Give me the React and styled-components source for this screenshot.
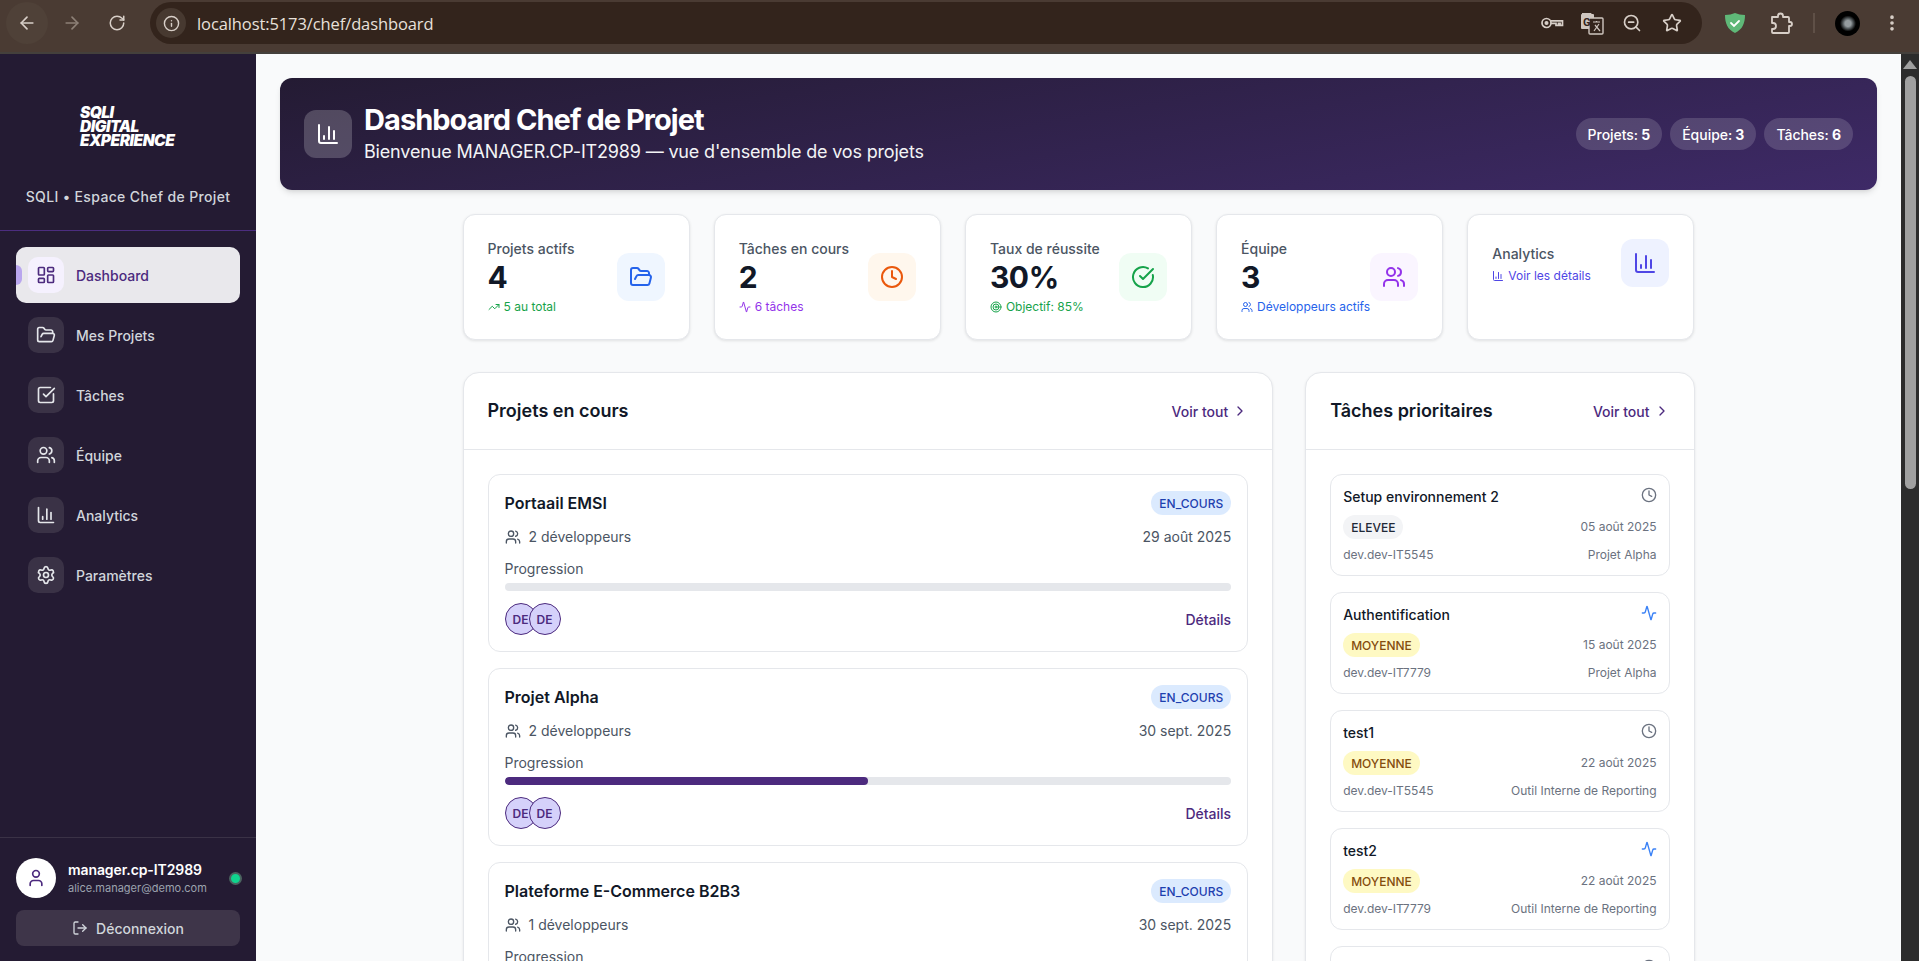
import React from 'react';
import styled, { createGlobalStyle } from 'styled-components';
import {
  Activity, ArrowLeft, ArrowRight, BarChart3, CheckCircle, CheckSquare, ChevronRight, Clock,
  FolderOpen, Info, LayoutDashboard, LogOut, MoreVertical, RotateCw, Settings, Star,
  Target, TrendingUp, User, Users, ZoomOut,
} from 'lucide-react';

const GlobalStyle = createGlobalStyle`
  html, body { margin: 0; height: 100%; overflow: hidden; }
  body { font-family: Inter, "Noto Sans", sans-serif; color: #111827; }
  * { box-sizing: border-box; }
`;

const Window = styled.div`
  height: 100vh;
  display: flex;
  flex-direction: column;
`;

/* browser toolbar */
const Toolbar = styled.div`
  height: 54px;
  flex: none;
  display: flex;
  align-items: center;
  padding: 0 5px 6px 6px;
  background: #4a3b33;
  border-bottom: 2px solid #44403c;
  color: #d8cfc8;
`;

const Slot = styled.div`
  width: ${p => p.$w || 42}px;
  height: 42px;
  flex: none;
  display: flex;
  align-items: center;
  justify-content: center;
  border-radius: 50%;
  background: ${p => (p.$hover ? '#4f4138' : 'transparent')};
  color: ${p => (p.$dim ? '#8d8077' : 'inherit')};
  margin-right: ${p => p.$mr || 0}px;
`;

const AddressBar = styled.div`
  width: 1552px;
  height: 42px;
  flex: none;
  margin: 0 10px 0 12px;
  padding: 0 10px 0 6px;
  display: flex;
  align-items: center;
  border-radius: 21px;
  background: #33241c;
`;

const SiteInfo = styled.div`
  width: 30px;
  height: 30px;
  display: flex;
  align-items: center;
  justify-content: center;
  border-radius: 50%;
  background: #473930;
`;

const Url = styled.div`
  margin-left: 11px;
  flex: 1;
  font-family: "Open Sans", sans-serif;
  font-size: 16.5px;
  letter-spacing: -0.1px;
  color: #e8e0da;
`;

const Divider = styled.div`
  width: 20px;
  display: flex;
  justify-content: center;
  &::after {
    content: '';
    width: 2px;
    height: 20px;
    background: #5f5047;
  }
`;

const ProfileDot = styled.div`
  width: 25px;
  height: 25px;
  border-radius: 50%;
  background: radial-gradient(circle at 52% 50%, #959c9f 0 3px, #555b5e 5px, #000 8px, #000 100%);
`;

/* page */
const Body = styled.div`
  flex: 1;
  min-height: 0;
  display: flex;
`;

const Sidebar = styled.aside`
  width: 256px;
  flex: none;
  display: flex;
  flex-direction: column;
  background: #241b33;
`;

const Brand = styled.div`
  height: 177px;
  flex: none;
  display: flex;
  flex-direction: column;
  align-items: center;
  border-bottom: 1px solid #4c2d80;
`;

const Logo = styled.div`
  margin: 52px 0 0 0;
  width: 96px;
  font-family: Inter, sans-serif;
  font-size: 15.5px;
  line-height: 14px;
  font-weight: 900;
  font-style: italic;
  letter-spacing: -0.5px;
  color: #fff;
  white-space: nowrap;
  text-transform: uppercase;
`;

const Tagline = styled.div`
  margin-top: 39px;
  font-size: 14px;
  line-height: 20px;
  font-weight: 500;
  letter-spacing: 0.35px;
  color: #d1d5db;
`;

const Nav = styled.nav`
  flex: 1;
  display: flex;
  flex-direction: column;
  gap: 4px;
  padding: 16px 16px 0;
`;

const NavItem = styled.div`
  position: relative;
  height: 56px;
  padding: 0 12px;
  display: flex;
  align-items: center;
  gap: 12px;
  border-radius: 10px;
  font-size: 14px;
  font-weight: 500;
  background: ${p => (p.$active ? '#e9e8ec' : 'transparent')};
  color: ${p => (p.$active ? '#4c2a7e' : '#d1d5db')};
  ${p => p.$active && `
    &::before {
      content: '';
      position: absolute;
      left: 0;
      top: 18px;
      width: 6px;
      height: 20px;
      border-radius: 0 6px 6px 0;
      background: #b9a6ee;
    }
  `}
`;

const NavIcon = styled.div`
  width: 36px;
  height: 36px;
  display: flex;
  align-items: center;
  justify-content: center;
  border-radius: 10px;
  background: ${p => (p.$active ? '#f5f1fe' : '#3a3246')};
  color: ${p => (p.$active ? '#4c2a7e' : '#e5e7eb')};
`;

const SideFooter = styled.div`
  flex: none;
  padding: 20px 16px 15px;
  border-top: 1px solid #3a3246;
`;

const UserRow = styled.div`
  display: flex;
  align-items: center;
  gap: 12px;
`;

const UserAvatar = styled.div`
  width: 40px;
  height: 40px;
  flex: none;
  display: flex;
  align-items: center;
  justify-content: center;
  border-radius: 50%;
  background: #fff;
  color: #4c2a7e;
`;

const UserText = styled.div`
  flex: 1;
  min-width: 0;
`;

const UserName = styled.div`
  font-size: 14px;
  line-height: 20px;
  font-weight: 600;
  letter-spacing: -0.1px;
  color: #fff;
`;

const UserMail = styled.div`
  font-size: 11px;
  line-height: 16px;
  color: #9ca3af;
`;

const StatusDot = styled.div`
  width: 13px;
  height: 13px;
  flex: none;
  margin-right: -2px;
  border-radius: 50%;
  background: #10d48e;
  border: 2px solid #4b6460;
`;

const LogoutButton = styled.div`
  height: 36px;
  margin-top: 12px;
  display: flex;
  align-items: center;
  justify-content: center;
  gap: 8px;
  border-radius: 8px;
  background: #3e3549;
  font-size: 14px;
  font-weight: 500;
  color: #d1d5db;
`;

const Main = styled.main`
  flex: 1;
  min-width: 0;
  overflow: hidden;
  padding: 24px 24px 0;
  background: #f9fafb;
`;

const Banner = styled.header`
  height: 112px;
  padding: 0 24px;
  display: flex;
  align-items: center;
  justify-content: space-between;
  border-radius: 12px;
  background: linear-gradient(170deg, #241b33, #3e2a67);
  box-shadow: 0 4px 6px -1px rgba(0, 0, 0, .1), 0 2px 4px -2px rgba(0, 0, 0, .1);
  color: #fff;
`;

const BannerLeft = styled.div`
  display: flex;
  align-items: center;
  gap: 12px;
`;

const BannerText = styled.div`
  padding-bottom: 4px;
`;

const BannerIcon = styled.div`
  width: 48px;
  height: 48px;
  display: flex;
  align-items: center;
  justify-content: center;
  border-radius: 12px;
  background: rgba(255, 255, 255, .2);
`;

const BannerTitle = styled.h1`
  margin: 0;
  font-size: 29px;
  line-height: 36px;
  font-weight: 700;
  letter-spacing: -0.95px;
`;

const BannerSub = styled.p`
  margin: 4px 0 0;
  font-size: 18px;
  line-height: 20px;
  letter-spacing: -0.17px;
  color: #f3f4f6;
`;

const Pills = styled.div`
  display: flex;
  gap: 8px;
`;

const Pill = styled.div`
  height: 32px;
  padding: 0 12px;
  display: flex;
  align-items: center;
  gap: 3.2px;
  border-radius: 16px;
  background: rgba(255, 255, 255, .15);
  font-size: 14px;
  font-weight: 500;
  letter-spacing: -0.03px;
  b { font-weight: 700; }
`;

const Content = styled.div`
  max-width: 1280px;
  margin: 24px auto 0;
  padding: 0 24px;
`;

const StatGrid = styled.div`
  display: grid;
  grid-template-columns: repeat(5, 1fr);
  gap: 24px;
  margin-bottom: 32px;
`;

const StatCard = styled.div`
  height: 126px;
  padding: 24px;
  display: flex;
  align-items: ${p => (p.$top ? 'flex-start' : 'center')};
  justify-content: space-between;
  background: #fff;
  border: 1px solid #e5e7eb;
  border-radius: 12px;
  box-shadow: 0 1px 3px rgba(0, 0, 0, .1);
`;

const StatBody = styled.div`
  min-width: 0;
  white-space: nowrap;
  ${p => p.$short && 'padding-top: 5px;'}
`;

const StatLabel = styled.div`
  font-size: 14px;
  line-height: 20px;
  font-weight: 500;
  color: #4b5563;
`;

const StatValue = styled.div`
  font-size: 30px;
  line-height: 36px;
  font-weight: 700;
  letter-spacing: -0.4px;
  color: #111827;
`;

const StatNote = styled.div`
  margin-top: 4px;
  display: flex;
  align-items: center;
  gap: 4px;
  font-size: 12px;
  line-height: 16px;
  color: ${p => p.$color};
`;

const StatIcon = styled.div`
  width: 48px;
  height: 48px;
  flex: none;
  display: flex;
  align-items: center;
  justify-content: center;
  border-radius: 12px;
  background: ${p => p.$bg};
  color: ${p => p.$color};
`;

const Columns = styled.div`
  display: grid;
  grid-template-columns: repeat(3, 1fr);
  gap: 32px;
  align-items: start;
`;

const Panel = styled.section`
  grid-column: span ${p => p.$span || 1};
  background: #fff;
  border: 1px solid #e5e7eb;
  border-radius: 16px;
  box-shadow: 0 1px 3px rgba(0, 0, 0, .08);
`;

const PanelHead = styled.div`
  height: 77px;
  padding: 0 24px;
  display: flex;
  align-items: center;
  justify-content: space-between;
  border-bottom: 1px solid #e5e7eb;
`;

const PanelTitle = styled.h2`
  margin: 0;
  font-size: 18px;
  line-height: 28px;
  font-weight: 600;
  color: #111827;
`;

const SeeAll = styled.div`
  display: flex;
  align-items: center;
  gap: 4px;
  font-size: 14px;
  font-weight: 500;
  color: #4c2a7e;
`;

const PanelBody = styled.div`
  padding: 24px;
  display: flex;
  flex-direction: column;
  gap: 16px;
`;

const ProjectCard = styled.article`
  padding: 16px;
  border: 1px solid #e5e7eb;
  border-radius: 12px;
`;

const Between = styled.div`
  display: flex;
  align-items: ${p => p.$align || 'center'};
  justify-content: space-between;
  margin-top: ${p => p.$mt || 0}px;
`;

const ProjectName = styled.h3`
  margin: 0;
  font-size: 16px;
  line-height: 24px;
  font-weight: 600;
  color: #111827;
`;

const Badge = styled.span`
  height: 24px;
  padding: 0 8px;
  display: inline-flex;
  align-items: center;
  border-radius: 12px;
  font-size: 12px;
  font-weight: 500;
  background: ${p => p.$bg};
  color: ${p => p.$color};
`;

const Meta = styled.div`
  display: flex;
  align-items: center;
  gap: 8px;
  font-size: 14px;
  line-height: 20px;
  color: #4b5563;
`;

const ProgressLabel = styled.div`
  margin-top: 12px;
  font-size: 14px;
  line-height: 20px;
  color: #4b5563;
`;

const Track = styled.div`
  height: 8px;
  margin-top: 4px;
  border-radius: 4px;
  background: #e5e7eb;
  overflow: hidden;
`;

const Fill = styled.div`
  height: 100%;
  border-radius: 4px;
  background: #4c2a7e;
`;

const Avatars = styled.div`
  display: flex;
`;

const Avatar = styled.div`
  width: 32px;
  height: 32px;
  display: flex;
  align-items: center;
  justify-content: center;
  border-radius: 50%;
  border: 1px solid #4c2a7e;
  background: #d5d1fa;
  font-size: 12px;
  font-weight: 600;
  color: #4c2a7e;
  & + & { margin-left: -8px; }
`;

const DetailsLink = styled.span`
  font-size: 14px;
  font-weight: 500;
  color: #4c2a7e;
`;

const TaskCard = styled.article`
  padding: 12px;
  border: 1px solid #e5e7eb;
  border-radius: 12px;
`;

const TaskName = styled.div`
  font-size: 14px;
  line-height: 20px;
  font-weight: 500;
  color: #111827;
`;

const TaskIcon = styled.div`
  display: flex;
  color: ${p => p.$color};
`;

const SmallText = styled.span`
  font-size: 12px;
  line-height: 16px;
  color: #6b7280;
`;

/* page scrollbar */
const ScrollRail = styled.div`
  width: 18px;
  flex: none;
  display: flex;
  flex-direction: column;
  align-items: center;
  background: #2c2c2c;
  padding-top: 6px;
`;

const ScrollArrow = styled.div`
  width: 0;
  height: 0;
  border-left: 7px solid transparent;
  border-right: 7px solid transparent;
  border-bottom: 9px solid #a0a0a0;
`;

const ScrollThumb = styled.div`
  width: 11px;
  height: 413px;
  margin-top: 7px;
  border-radius: 6px;
  background: #a0a0a0;
`;

const KeyIcon = () => (
  <svg width="24" height="24" viewBox="0 0 24 24" fill="none" stroke="currentColor" strokeWidth="1.7">
    <circle cx="6.5" cy="12" r="4.5" />
    <circle cx="6.5" cy="12" r="1.2" fill="currentColor" />
    <path d="M11 9.8h11.5v4.6h-2.4v-2h-1.6v2H16v-2h-5" />
  </svg>
);

const TranslateIcon = () => (
  <svg width="24" height="24" viewBox="0 0 24 24">
    <path d="M2 2h9l1.5 2H2z" fill="#cfc6bf" />
    <rect x="1" y="3" width="13" height="15" rx="1" fill="#cfc6bf" />
    <rect x="9" y="7" width="14" height="16" rx="1" fill="#33241c" stroke="#cfc6bf" strokeWidth="1.4" />
    <text x="3" y="15" fontSize="11" fontWeight="700" fontFamily="Roboto, sans-serif" fill="#33241c">G</text>
    <path d="M13 11h7M16.5 10v1.5M14 20l5-7M15 14l5 6" stroke="#cfc6bf" strokeWidth="1.2" fill="none" />
  </svg>
);

const ShieldIcon = () => (
  <svg width="22" height="22" viewBox="0 0 22 22">
    <path d="M11 1c3 1.3 6 2 10 2 0 8-2.500 14.500-10 18C3.500 17.500 1 11 1 3c4 0 7-.7 10-2z" fill="#5fb878" />
    <path d="M7 11l3 3 5-5" fill="none" stroke="#fff" strokeWidth="1.800" strokeLinecap="round" />
  </svg>
);

const ExtensionIcon = () => (
  <svg width="24" height="24" viewBox="0 0 24 24" fill="none" stroke="currentColor" strokeWidth="1.8" strokeLinejoin="round">
    <path d="M3 6h6V5a2.500 2.500 0 0 1 5 0v1h5a1 1 0 0 1 1 1v4h1a2 2 0 0 1 0 4h-1v6a1 1 0 0 1-1 1H4a1 1 0 0 1-1-1v-3h1a3 3 0 0 0 0-6H3z" />
  </svg>
);

const navItems = [
  { label: 'Dashboard', icon: LayoutDashboard, active: true },
  { label: 'Mes Projets', icon: FolderOpen },
  { label: 'Tâches', icon: CheckSquare },
  { label: 'Équipe', icon: Users },
  { label: 'Analytics', icon: BarChart3 },
  { label: 'Paramètres', icon: Settings },
];

const stats = [
  { label: 'Projets actifs', value: '4', note: '5 au total', noteIcon: TrendingUp, noteColor: '#16a34a', icon: FolderOpen, bg: '#eff6ff', color: '#2563eb' },
  { label: 'Tâches en cours', value: '2', note: '6 tâches', noteIcon: Activity, noteColor: '#9333ea', icon: Clock, bg: '#fff7ed', color: '#ea580c' },
  { label: 'Taux de réussite', value: '30%', note: 'Objectif: 85%', noteIcon: Target, noteColor: '#16a34a', icon: CheckCircle, bg: '#f0fdf4', color: '#16a34a' },
  { label: 'Équipe', value: '3', note: 'Développeurs actifs', noteIcon: Users, noteColor: '#2563eb', icon: Users, bg: '#faf5ff', color: '#9333ea' },
  { label: 'Analytics', note: 'Voir les détails', noteIcon: BarChart3, noteColor: '#4f46e5', icon: BarChart3, bg: '#eef2ff', color: '#4f46e5' },
];

const projects = [
  { name: 'Portaail EMSI', devs: 2, date: '29 août 2025', progress: 0 },
  { name: 'Projet Alpha', devs: 2, date: '30 sept. 2025', progress: 50 },
  { name: 'Plateforme E-Commerce B2B3', devs: 1, date: '30 sept. 2025', progress: 0 },
];

const priorities = {
  ELEVEE: { bg: '#f3f4f6', color: '#1f2937' },
  MOYENNE: { bg: '#fef9c3', color: '#854d0e' },
};

const tasks = [
  { name: 'Setup environnement 2', priority: 'ELEVEE', date: '05 août 2025', dev: 'dev.dev-IT5545', project: 'Projet Alpha', todo: true },
  { name: 'Authentification', priority: 'MOYENNE', date: '15 août 2025', dev: 'dev.dev-IT7779', project: 'Projet Alpha' },
  { name: 'test1', priority: 'MOYENNE', date: '22 août 2025', dev: 'dev.dev-IT5545', project: 'Outil Interne de Reporting', todo: true },
  { name: 'test2', priority: 'MOYENNE', date: '22 août 2025', dev: 'dev.dev-IT7779', project: 'Outil Interne de Reporting' },
  { name: 'test3', priority: 'MOYENNE', date: '22 août 2025', dev: 'dev.dev-IT5545', project: 'Outil Interne de Reporting', todo: true },
];

function BrowserBar() {
  return (
    <Toolbar>
      <Slot $hover $mr={3}><ArrowLeft size={20} strokeWidth={2} /></Slot>
      <Slot $dim $mr={3}><ArrowRight size={20} strokeWidth={2} /></Slot>
      <Slot><RotateCw size={18} strokeWidth={2} /></Slot>
      <AddressBar>
        <SiteInfo><Info size={17} strokeWidth={2} /></SiteInfo>
        <Url>localhost:5173/chef/dashboard</Url>
        <Slot $w={40}><KeyIcon /></Slot>
        <Slot $w={40}><TranslateIcon /></Slot>
        <Slot $w={40}><ZoomOut size={20} /></Slot>
        <Slot $w={40}><Star size={20} /></Slot>
      </AddressBar>
      <Slot $w={46}><ShieldIcon /></Slot>
      <Slot $w={46}><ExtensionIcon /></Slot>
      <Divider />
      <Slot $w={46}><ProfileDot /></Slot>
      <Slot $w={44}><MoreVertical size={20} strokeWidth={2.4} /></Slot>
    </Toolbar>
  );
}

function SideMenu() {
  return (
    <Sidebar>
      <Brand>
        <Logo>SQLI<br />Digital<br />Experience</Logo>
        <Tagline>SQLI • Espace Chef de Projet</Tagline>
      </Brand>
      <Nav>
        {navItems.map(item => (
          <NavItem key={item.label} $active={item.active}>
            <NavIcon $active={item.active}><item.icon size={20} /></NavIcon>
            {item.label}
          </NavItem>
        ))}
      </Nav>
      <SideFooter>
        <UserRow>
          <UserAvatar><User size={20} /></UserAvatar>
          <UserText>
            <UserName>manager.cp-IT2989</UserName>
            <UserMail>alice.manager@demo.com</UserMail>
          </UserText>
          <StatusDot />
        </UserRow>
        <LogoutButton><LogOut size={16} />Déconnexion</LogoutButton>
      </SideFooter>
    </Sidebar>
  );
}

function Project({ project }) {
  return (
    <ProjectCard>
      <Between>
        <ProjectName>{project.name}</ProjectName>
        <Badge $bg="#dbeafe" $color="#1e40af">EN_COURS</Badge>
      </Between>
      <Between $mt={12}>
        <Meta><Users size={16} />{project.devs} développeurs</Meta>
        <Meta>{project.date}</Meta>
      </Between>
      <ProgressLabel>Progression</ProgressLabel>
      <Track><Fill style={{ width: `${project.progress}%` }} /></Track>
      <Between $mt={12}>
        <Avatars>
          {Array.from({ length: project.devs }, (_, i) => <Avatar key={i}>DE</Avatar>)}
        </Avatars>
        <DetailsLink>Détails</DetailsLink>
      </Between>
    </ProjectCard>
  );
}

function Task({ task }) {
  const TypeIcon = task.todo ? Clock : Activity;
  return (
    <TaskCard>
      <Between $align="flex-start">
        <TaskName>{task.name}</TaskName>
        <TaskIcon $color={task.todo ? '#6b7280' : '#3b82f6'}><TypeIcon size={16} /></TaskIcon>
      </Between>
      <Between $mt={8}>
        <Badge $bg={priorities[task.priority].bg} $color={priorities[task.priority].color}>{task.priority}</Badge>
        <SmallText>{task.date}</SmallText>
      </Between>
      <Between $mt={8}>
        <SmallText>{task.dev}</SmallText>
        <SmallText>{task.project}</SmallText>
      </Between>
    </TaskCard>
  );
}

export default function App() {
  return (
    <Window>
      <GlobalStyle />
      <BrowserBar />
      <Body>
        <SideMenu />
        <Main>
          <Banner>
            <BannerLeft>
              <BannerIcon><BarChart3 size={24} /></BannerIcon>
              <BannerText>
                <BannerTitle>Dashboard Chef de Projet</BannerTitle>
                <BannerSub>Bienvenue MANAGER.CP-IT2989 — vue d'ensemble de vos projets</BannerSub>
              </BannerText>
            </BannerLeft>
            <Pills>
              <Pill>Projets: <b>5</b></Pill>
              <Pill>Équipe: <b>3</b></Pill>
              <Pill>Tâches: <b>6</b></Pill>
            </Pills>
          </Banner>
          <Content>
            <StatGrid>
              {stats.map(s => (
                <StatCard key={s.label} $top={!s.value}>
                  <StatBody $short={!s.value}>
                    <StatLabel>{s.label}</StatLabel>
                    {s.value && <StatValue>{s.value}</StatValue>}
                    <StatNote $color={s.noteColor}><s.noteIcon size={12} />{s.note}</StatNote>
                  </StatBody>
                  <StatIcon $bg={s.bg} $color={s.color}><s.icon size={24} /></StatIcon>
                </StatCard>
              ))}
            </StatGrid>
            <Columns>
              <Panel $span={2}>
                <PanelHead>
                  <PanelTitle>Projets en cours</PanelTitle>
                  <SeeAll>Voir tout<ChevronRight size={16} /></SeeAll>
                </PanelHead>
                <PanelBody>
                  {projects.map(p => <Project key={p.name} project={p} />)}
                </PanelBody>
              </Panel>
              <Panel>
                <PanelHead>
                  <PanelTitle>Tâches prioritaires</PanelTitle>
                  <SeeAll>Voir tout<ChevronRight size={16} /></SeeAll>
                </PanelHead>
                <PanelBody>
                  {tasks.map(t => <Task key={t.name} task={t} />)}
                </PanelBody>
              </Panel>
            </Columns>
          </Content>
        </Main>
        <ScrollRail>
          <ScrollArrow />
          <ScrollThumb />
        </ScrollRail>
      </Body>
    </Window>
  );
}
